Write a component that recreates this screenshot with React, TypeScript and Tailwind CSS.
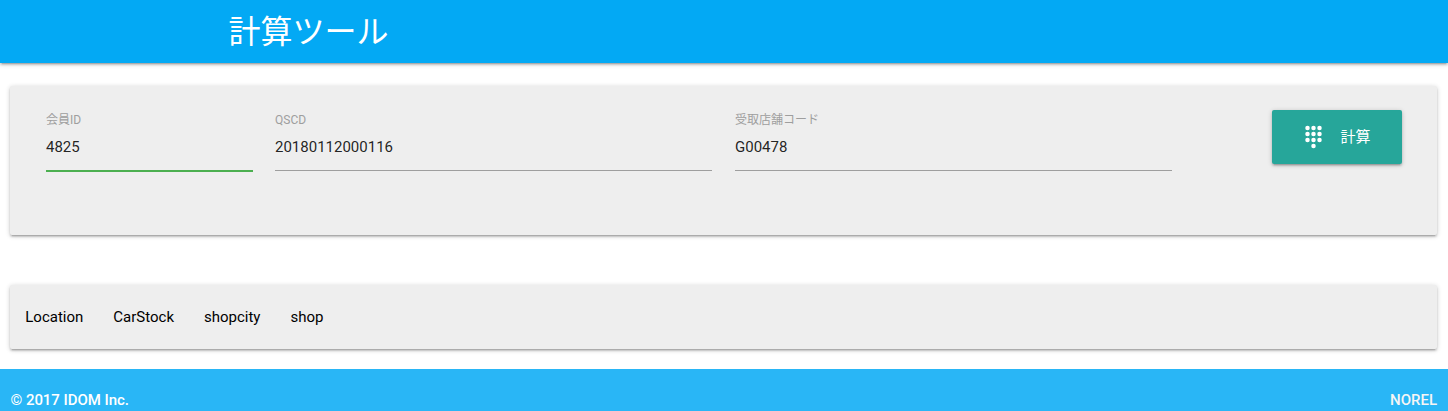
const SHADOW =
  'shadow-[0_2px_2px_0_rgba(0,0,0,0.14),0_3px_1px_-2px_rgba(0,0,0,0.12),0_1px_5px_0_rgba(0,0,0,0.2)]';
const CARD = 'mx-[10px] rounded-[2px] bg-[#eeeeee] ' + SHADOW;

type FieldProps = { label: string; value: string; width: string; active?: boolean };

function Field({ label, value, width, active }: FieldProps) {
  return (
    <div className={width}>
      <div className="h-[18px] text-[12px] leading-[20px] text-[#9e9e9e]">{label}</div>
      <div
        className={
          'leading-[38px] text-black/87 ' +
          (active ? 'h-[44px] border-b-2 border-[#4caf50]' : 'h-[43px] border-b border-[#9e9e9e]')
        }
      >
        {value}
      </div>
    </div>
  );
}

const DOTS = [
  [6, 3], [12, 3], [18, 3],
  [6, 9], [12, 9], [18, 9],
  [6, 15], [12, 15], [18, 15],
  [12, 21],
];

function DialpadIcon() {
  return (
    <svg className="size-[24px] shrink-0" viewBox="0 0 24 24" fill="currentColor">
      {DOTS.map(([x, y]) => (
        <circle key={`${x}-${y}`} cx={x - 0.5} cy={y} r={2.25} />
      ))}
    </svg>
  );
}

export default function App() {
  return (
    <div className="h-[411px] overflow-hidden bg-white font-['Roboto','Noto_Sans_CJK_JP',sans-serif] text-[15px] text-black/87">
      <header className={'h-[63px] bg-[#03a9f4] pl-[228.5px] ' + SHADOW}>
        <h1 className="font-['Noto_Sans_CJK_JP',sans-serif] text-[32px] leading-[58px] font-normal whitespace-nowrap text-white">
          計算ツール
        </h1>
      </header>
      <main>
        <section className={CARD + ' mt-[23px] flex h-[149px] w-[1427px] pt-[24px] pl-[36px]'}>
          <Field label="会員ID" value="4825" width="w-[207px]" active />
          <Field label="QSCD" value="20180112000116" width="ml-[22px] w-[437px]" />
          <Field label="受取店舗コード" value="G00478" width="ml-[23px] w-[437px]" />
          <button
            className={
              'ml-[100px] flex h-[54px] w-[130px] items-center rounded-[2px] bg-[#26a69a] pl-[30px] text-white ' +
              SHADOW
            }
          >
            <DialpadIcon />
            <span className="ml-[14.5px]">計算</span>
          </button>
        </section>
        <nav className={CARD + ' mt-[50px] flex h-[64px] w-[1427px] gap-[30px] pl-[15.25px] leading-[64px] text-black'}>
          <a>Location</a>
          <a>CarStock</a>
          <a>shopcity</a>
          <a>shop</a>
        </nav>
      </main>
      <footer className="mt-[20px] flex h-[42px] justify-between bg-[#29b6f6] pt-[20px] pr-[11px] pl-[10.5px] leading-[23px] font-medium text-white">
        <span className="tracking-[-0.05px]">© 2017 IDOM Inc.</span>
        <span className="text-[#f5f5f5]">NOREL</span>
      </footer>
    </div>
  );
}
